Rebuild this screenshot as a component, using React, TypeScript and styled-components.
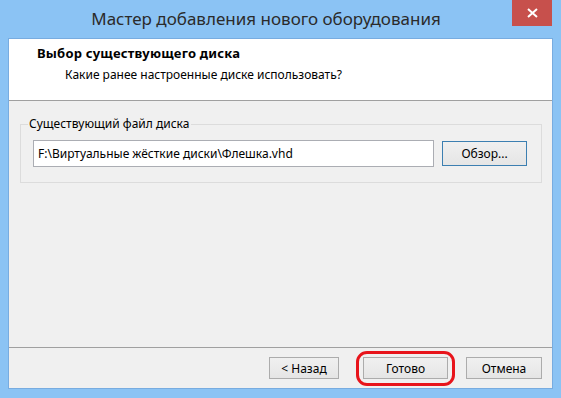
import styled, { createGlobalStyle } from "styled-components";

const GlobalStyle = createGlobalStyle`
    html, body {
        margin: 0;
        padding: 0;
        background: #8bc3f4;
    }
    * {
        box-sizing: border-box;
    }
`;

const uiFont = `"Noto Sans", "Open Sans", sans-serif`;

const Window = styled.div`
    width: 561px;
    height: 398px;
    display: flex;
    flex-direction: column;
    background: #8bc3f4;
    font-family: ${uiFont};
    font-size: 12px;
    color: #000;
`;

const TitleBar = styled.div`
    height: 38px;
    display: flex;
    align-items: flex-start;
`;

const Caption = styled.div`
    flex: 1;
    padding: 4px 0 0 20px;
    text-align: center;
    font-size: 17px;
    line-height: 30px;
    color: #2b2b2b;
    white-space: nowrap;
`;

const CloseButton = styled.div`
    width: 40px;
    height: 26px;
    margin-right: 9px;
    background: #c7504c;
    display: flex;
    align-items: center;
    justify-content: center;
`;

const Client = styled.div`
    flex: 1;
    margin: 0 8px 9px;
    border: 1px solid #78ace0;
    background: #f0f0f0;
    display: flex;
    flex-direction: column;
`;

const Header = styled.div`
    height: 62px;
    background: #fff;
    border-bottom: 1px solid #a0a0a0;
    padding: 5px 0 0 28px;
`;

const HeaderTitle = styled.div`
    font-weight: 700;
    font-size: 13px;
    letter-spacing: 0.2px;
    line-height: 18px;
`;

const HeaderSubtitle = styled.div`
    padding: 4px 0 0 28px;
    line-height: 18px;
`;

const Body = styled.div`
    flex: 1;
    padding: 15px 10px 0 11px;
`;

const GroupBox = styled.fieldset`
    margin: 0;
    padding: 8px 14px 15px 12px;
    border: 1px solid #dcdcdc;
    display: flex;
    align-items: center;
    gap: 8px;
`;

const GroupLegend = styled.legend`
    padding: 0 2px 0 1px;
    margin-left: -5px;
    line-height: 16px;
    color: #000;
`;

const PathField = styled.div`
    width: 401px;
    height: 27px;
    border: 1px solid #abadb3;
    background: #fff;
    padding: 0 4px;
    display: flex;
    align-items: center;
    white-space: nowrap;
`;

const Button = styled.div<{ $width: number; $height: number; $focused?: boolean }>`
    width: ${(p) => p.$width}px;
    height: ${(p) => p.$height}px;
    border: 1px solid ${(p) => (p.$focused ? "#3c7fb1" : "#acacac")};
    background: linear-gradient(#f0f0f0, #e5e5e5);
    display: flex;
    align-items: center;
    justify-content: center;
    white-space: nowrap;
`;

const Footer = styled.div`
    height: 41px;
    border-top: 1px solid #a0a0a0;
    padding: 9px 10px 0 0;
    display: flex;
    justify-content: flex-end;
    align-items: flex-start;
    gap: 24px;
`;

const Highlight = styled.span`
    position: relative;
    display: inline-flex;
    margin-right: -6px;
`;

const Ring = styled.span`
    position: absolute;
    left: -7px;
    right: -7px;
    top: -6px;
    bottom: -7px;
    border: 3px solid #e8141b;
    border-radius: 11px;
`;

export default function App() {
    return (
        <>
            <GlobalStyle />
            <Window>
                <TitleBar>
                    <Caption>Мастер добавления нового оборудования</Caption>
                    <CloseButton>
                        <svg width="11" height="10" viewBox="0 0 11 10">
                            <path
                                d="M1 1 L10 9 M10 1 L1 9"
                                stroke="#fff"
                                strokeWidth="2"
                            />
                        </svg>
                    </CloseButton>
                </TitleBar>
                <Client>
                    <Header>
                        <HeaderTitle>Выбор существующего диска</HeaderTitle>
                        <HeaderSubtitle>
                            Какие ранее настроенные диске использовать?
                        </HeaderSubtitle>
                    </Header>
                    <Body>
                        <GroupBox>
                            <GroupLegend>Существующий файл диска</GroupLegend>
                            <PathField>
                                F:\Виртуальные жёсткие диски\Флешка.vhd
                            </PathField>
                            <Button $width={85} $height={25} $focused>
                                Обзор...
                            </Button>
                        </GroupBox>
                    </Body>
                    <Footer>
                        <Button $width={70} $height={22}>
                            &lt; Назад
                        </Button>
                        <Highlight>
                            <Button $width={85} $height={22}>
                                Готово
                            </Button>
                            <Ring />
                        </Highlight>
                        <Button $width={76} $height={22}>
                            Отмена
                        </Button>
                    </Footer>
                </Client>
            </Window>
        </>
    );
}
